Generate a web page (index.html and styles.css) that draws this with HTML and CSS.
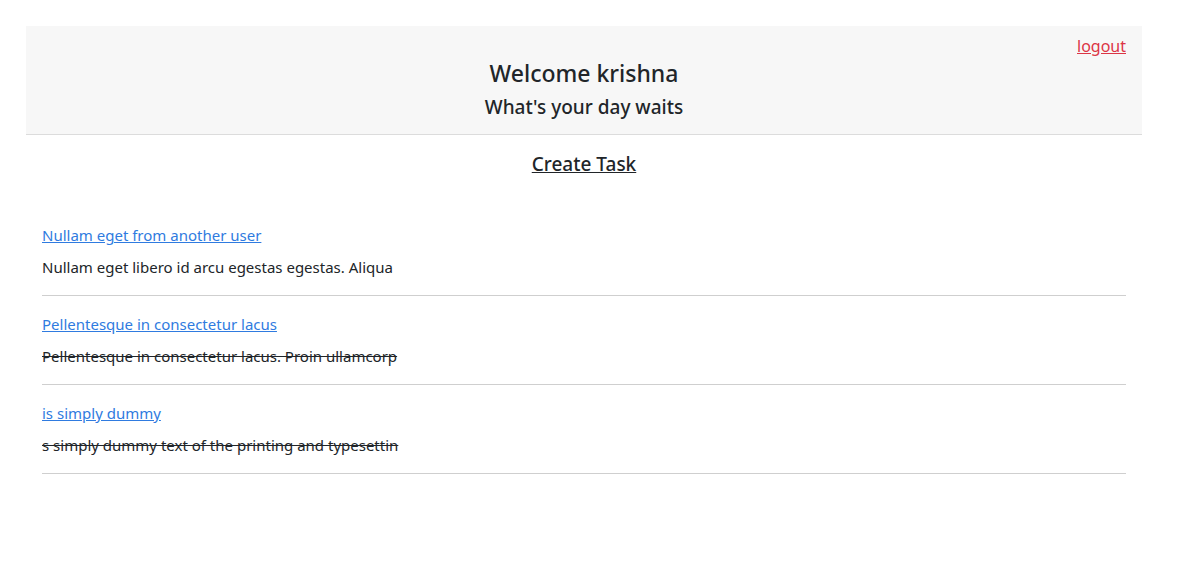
FILE: index.html
```html
<!DOCTYPE html>
<html>
<head>
<meta charset="utf-8">
<link rel="stylesheet" href="styles.css">
</head>
<body>
<div class="page">
  <header class="hero">
    <a class="logout" href="#">logout</a>
    <h1 class="title">Welcome krishna</h1>
    <h2 class="subtitle">What's your day waits</h2>
  </header>
  <div class="create"><a href="#">Create Task</a></div>
  <ul class="tasks">
    <li class="task">
      <a class="task-title" href="#">Nullam eget from another user</a>
      <p class="task-desc">Nullam eget libero id arcu egestas egestas. Aliqua</p>
    </li>
    <li class="task">
      <a class="task-title" href="#">Pellentesque in consectetur lacus</a>
      <p class="task-desc done">Pellentesque in consectetur lacus. Proin ullamcorp</p>
    </li>
    <li class="task">
      <a class="task-title" href="#">is simply dummy</a>
      <p class="task-desc done">s simply dummy text of the printing and typesettin</p>
    </li>
  </ul>
</div>
</body>
</html>
```
FILE: styles.css
```css
* { box-sizing: border-box; }
body {
  margin: 0;
  font-family: "Noto Sans", "Open Sans", sans-serif;
  color: #212529;
  background: #fff;
  font-size: 16px;
}
.page {
  margin: 26px 45px 0 26px;
}
.hero {
  position: relative;
  background: #f7f7f7;
  border-bottom: 1px solid #dcdcdc;
  height: 109px;
  padding-top: 31px;
  text-align: center;
}
.logout {
  position: absolute;
  top: 9px;
  right: 16px;
  color: #dc3545;
  font-size: 16px;
}
.title {
  margin: 0;
  font-size: 23px;
  font-weight: 500;
  line-height: 32px;
}
.subtitle {
  margin: 2px 0 0;
  font-size: 19px;
  font-weight: 500;
  line-height: 32px;
}
.create {
  text-align: center;
  margin-top: 15px;
}
.create a {
  color: #212529;
  font-size: 19px;
  font-weight: 500;
  line-height: 28px;
}
.tasks {
  list-style: none;
  margin: 29px 16px 0;
  padding: 0;
}
.task {
  border-bottom: 1px solid #cfcfcf;
  padding: 16px 0 16px;
}
.task-title {
  display: block;
  color: #2f7be0;
  font-size: 15px;
  line-height: 24px;
}
.task-desc {
  margin: 8px 0 0;
  font-size: 15px;
  line-height: 24px;
}
.done { text-decoration: line-through; }
```
